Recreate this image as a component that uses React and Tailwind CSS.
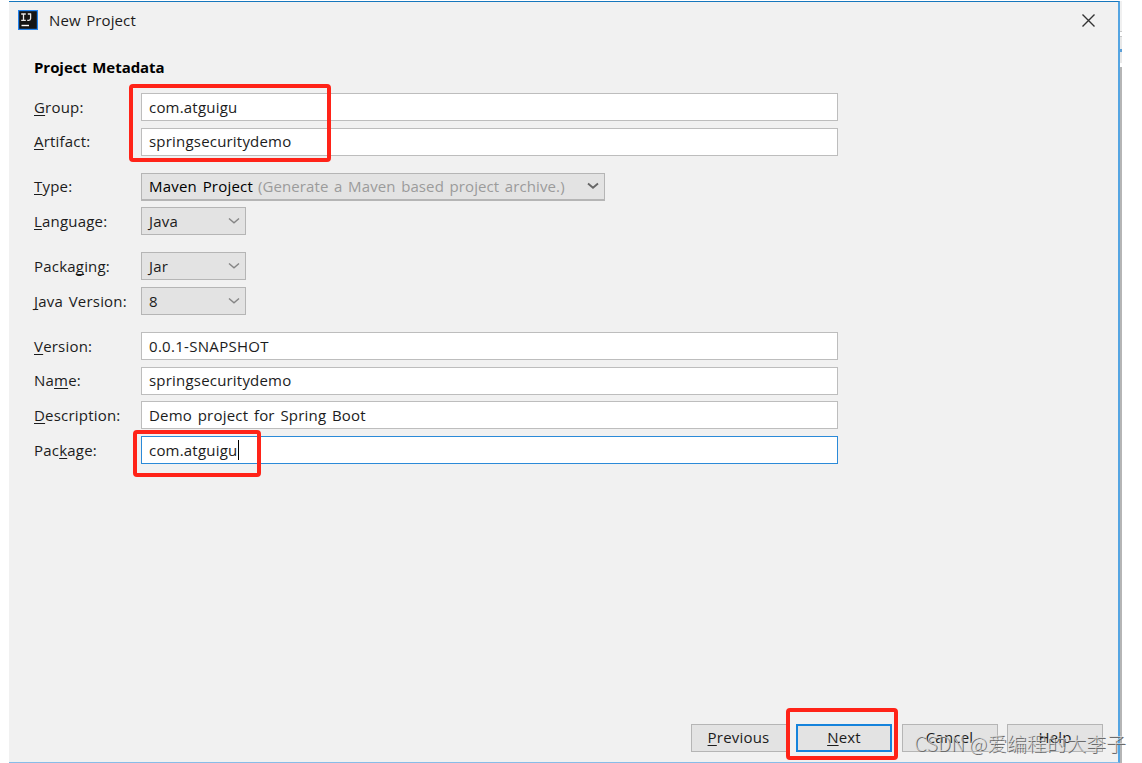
import clsx from 'clsx'

const groups = [
  [
    { label: ['', 'G', 'roup:'], value: 'com.atguigu', kind: 'input' },
    { label: ['', 'A', 'rtifact:'], value: 'springsecuritydemo', kind: 'input' },
  ],
  [
    { label: ['', 'T', 'ype:'], value: 'Maven Project', hint: '(Generate a Maven based project archive.)', kind: 'select' },
    { label: ['', 'L', 'anguage:'], value: 'Java', kind: 'select' },
  ],
  [
    { label: ['Packa', 'g', 'ing:'], value: 'Jar', kind: 'select' },
    { label: ['', 'J', 'ava Version:'], value: '8', kind: 'select' },
  ],
  [
    { label: ['', 'V', 'ersion:'], value: '0.0.1-SNAPSHOT', kind: 'input', tracking: 'tracking-[0.3px]' },
    { label: ['Na', 'm', 'e:'], value: 'springsecuritydemo', kind: 'input' },
    { label: ['', 'D', 'escription:'], value: 'Demo project for Spring Boot', kind: 'input' },
    { label: ['Pac', 'k', 'age:'], value: 'com.atguigu', kind: 'input', focused: true },
  ],
]

// Text with one underlined access key
function Mnemonic({ parts }) {
  const [before, key, after] = parts
  return (
    <span className="whitespace-pre">
      {before}
      <span className="underline decoration-1 underline-offset-2 [text-decoration-skip-ink:none]">{key}</span>
      {after}
    </span>
  )
}

function Chevron({ dark }) {
  return (
    <svg className="shrink-0" width="12" height="8" viewBox="0 0 12 8" fill="none">
      <path d="M1 1.5 L6 5.8 L11 1.5" stroke={dark ? '#666666' : '#858585'} strokeWidth={dark ? 1.8 : 1.4} />
    </svg>
  )
}

function TextField({ value, focused, tracking }) {
  return (
    <div
      className={clsx(
        'flex h-7 w-[697px] items-center border bg-white pb-px pl-[7px]',
        focused ? 'border-[#2b8ad8]' : 'border-[#bdbdbd]',
      )}
    >
      <span className={clsx('whitespace-pre', tracking)}>{value}</span>
      {focused && <span className="ml-px h-5 w-px bg-black" />}
    </div>
  )
}

function Select({ value, hint }) {
  return (
    <div
      className={clsx(
        'flex h-7 items-center justify-between border border-[#b5b5b5] bg-[#e3e3e3] pl-[7px] pr-[5px]',
        hint ? 'w-[464px] border-b-2' : 'w-[105px]',
      )}
    >
      <span className="flex whitespace-pre">
        <span className={clsx(hint && 'font-medium text-black')}>{value}</span>
        {hint && <span className="ml-[5px] tracking-[0.1px] text-[#9b9b9b]">{hint}</span>}
      </span>
      <Chevron dark={Boolean(hint)} />
    </div>
  )
}

function Row({ field }) {
  return (
    <div className="flex items-center">
      <div className="w-[107px] shrink-0 pb-px">
        <Mnemonic parts={field.label} />
      </div>
      {field.kind === 'input' ? <TextField {...field} /> : <Select {...field} />}
    </div>
  )
}

function DialogButton({ parts, primary }) {
  return (
    <button
      className={clsx(
        'flex h-7 w-[96px] items-center justify-center bg-[#e3e3e3] pb-0.5',
        primary ? 'border-2 border-[#1583dc]' : 'border border-[#b5b5b5]',
      )}
    >
      <Mnemonic parts={parts} />
    </button>
  )
}

function Logo() {
  return (
    <svg width="20" height="20" viewBox="0 0 20 20" fill="none">
      <rect width="20" height="20" fill="#2383ee" />
      <rect x="1.2" y="1.2" width="17.6" height="17.6" fill="#151515" />
      <path d="M3.2 4h4.6M5.5 4v6.4M3.2 10.4h4.6M9.8 4h3.2M12.6 3.4v5.2q0 1.8-1.8 1.8H9.2" stroke="#e8e8e8" strokeWidth="1.3" />
      <path d="M3.5 15.5h7.5" stroke="#ffffff" strokeWidth="1.4" />
    </svg>
  )
}

function Marker({ className }) {
  return <div className={clsx('pointer-events-none absolute rounded-[4px] border-4 border-[#ff2318]', className)} />
}

export default function App() {
  return (
    <div className="relative flex h-[763px] w-[1142px] overflow-hidden bg-white pl-[9px] pt-px font-['Open_Sans','Noto_Sans_CJK_SC',sans-serif] text-[15px] leading-5 tracking-[0.2px] text-[#1c1c1c] [word-spacing:1.6px]">
      <div className="flex h-[762px] w-[1111px] flex-col border-b border-r-2 border-t border-b-[#88bce8] border-r-[#55a5e2] border-t-[#1677bd] bg-[#f1f1f1]">
        <header className="flex h-9 items-center justify-between pl-[9px] pr-[23px]">
          <div className="flex items-center gap-[11px]">
            <Logo />
            <span className="pb-px tracking-[0.1px]">New Project</span>
          </div>
          <svg width="13" height="13" viewBox="0 0 13 13" fill="none">
            <path d="M0.5 0.5l12 12M12.5 0.5l-12 12" stroke="#333333" strokeWidth="1.4" />
          </svg>
        </header>

        <main className="flex-1 pl-[25px] pt-[19px]">
          <h1 className="mb-4 font-bold tracking-[-0.05px] text-black">Project Metadata</h1>
          <div className="flex flex-col gap-[17px]">
            {groups.map((fields, i) => (
              <div key={i} className="flex flex-col gap-[6.7px]">
                {fields.map((field) => (
                  <Row key={field.label.join('')} field={field} />
                ))}
              </div>
            ))}
          </div>
        </main>

        <footer className="flex justify-end gap-[9.5px] pb-[10px] pr-[15px]">
          <DialogButton parts={['', 'P', 'revious']} />
          <DialogButton parts={['', 'N', 'ext']} primary />
          <DialogButton parts={['Cancel', '', '']} />
          <DialogButton parts={['Help', '', '']} />
        </footer>
      </div>

      {/* sliver of the window behind the dialog */}
      <div className="flex h-full w-[2px] flex-col">
        <div className="h-[30px] bg-[#f0f0f0]" />
        <div className="h-[6px] border-y border-[#c8c8c8] bg-white" />
        <div className="h-[26px] bg-[#e8e8e8] pt-[12px]">
          <div className="h-[3px] bg-[#5b9fd8]" />
        </div>
        <div className="h-1 bg-white" />
        <div className="flex-1 bg-[#b5b5b5]" />
      </div>

      <Marker className="left-[129px] top-[84px] h-[78px] w-[202px]" />
      <Marker className="left-[133px] top-[430px] h-[47px] w-[128px]" />
      <Marker className="left-[786px] top-[708px] h-[52px] w-[112px]" />

      <div className="pointer-events-none absolute left-[914px] top-[731px] whitespace-pre font-['Noto_Sans_CJK_SC',sans-serif] text-[19.8px] font-light leading-6 tracking-normal text-[#dededeb0] [text-shadow:1px_1px_0_#6c6c6c] [word-spacing:0px]">
        CSDN @爱编程的大李子
      </div>
    </div>
  )
}
